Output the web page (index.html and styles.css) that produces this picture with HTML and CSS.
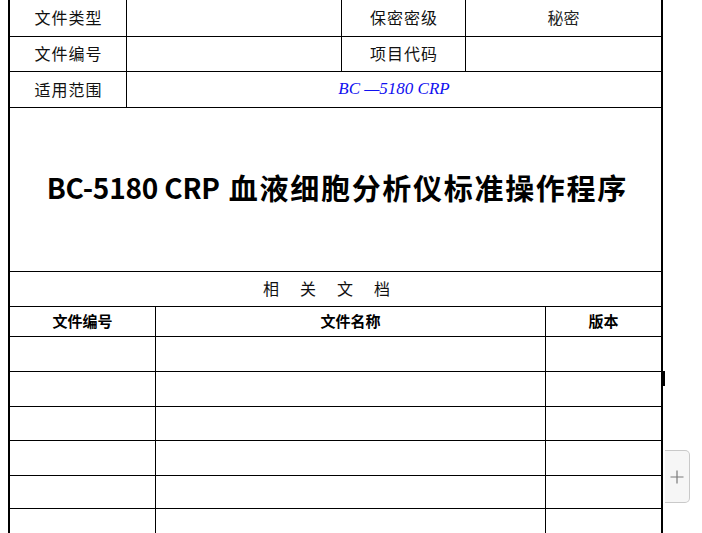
FILE: index.html
```html
<!DOCTYPE html>
<html lang="zh-CN">
<head>
<meta charset="utf-8">
<link rel="stylesheet" href="styles.css">
</head>
<body>
<div class="page">
  <div class="doc">
    <div class="info">
      <div class="cell label r1">文件类型</div>
      <div class="cell r1"></div>
      <div class="cell label r1">保密密级</div>
      <div class="cell value r1 last">秘密</div>
      <div class="cell label r2">文件编号</div>
      <div class="cell r2"></div>
      <div class="cell label r2">项目代码</div>
      <div class="cell r2 last"></div>
      <div class="cell label r3">适用范围</div>
      <div class="cell scope r3 last">BC —5180 CRP</div>
    </div>
    <div class="title"><span class="latin">BC-5180 CRP</span><span class="cjk">血液细胞分析仪标准操作程序</span></div>
    <div class="related">相关文档</div>
    <div class="docs">
      <div class="hcell">文件编号</div>
      <div class="hcell">文件名称</div>
      <div class="hcell last">版本</div>
      <div class="dcell h35"></div><div class="dcell h35"></div><div class="dcell h35 last"></div>
      <div class="dcell h35"></div><div class="dcell h35"></div><div class="dcell h35 last"></div>
      <div class="dcell h34"></div><div class="dcell h34"></div><div class="dcell h34 last"></div>
      <div class="dcell h35"></div><div class="dcell h35"></div><div class="dcell h35 last"></div>
      <div class="dcell h33"></div><div class="dcell h33"></div><div class="dcell h33 last"></div>
      <div class="dcell h35"></div><div class="dcell h35"></div><div class="dcell h35 last"></div>
    </div>
    <div class="marker"></div>
    <div class="addbtn">
      <svg width="14" height="14" viewBox="0 0 14 14"><path d="M7 0.5V13.5M0.5 7H13.5" stroke="#7a7a7a" stroke-width="1.2" fill="none"/></svg>
    </div>
  </div>
</div>
</body>
</html>
```
FILE: styles.css
```css
html, body {
  margin: 0;
  padding: 0;
  background: #fff;
  overflow: hidden;
}
.page {
  width: 702px;
  height: 533px;
  overflow: hidden;
  font-family: "Noto Sans CJK SC", "Noto Sans", sans-serif;
  color: #111;
}
.doc {
  position: relative;
  margin-left: 8px;
  width: 651px;
  border-left: 2px solid #000;
  border-right: 2px solid #000;
}
.info {
  display: grid;
  grid-template-columns: 117px 215px 124px 195px;
}
.cell {
  border-right: 1px solid #000;
  border-bottom: 1px solid #000;
  display: flex;
  align-items: center;
  justify-content: center;
  box-sizing: border-box;
  font-size: 16px;
  padding-bottom: 2px;
}
.cell.last { border-right: none; }
.r1 { height: 37px; }
.r2 { height: 35px; }
.r3 { height: 36px; }
.label {
  letter-spacing: 1px;
  padding-left: 1px;
}
.value { color: #222; }
.scope {
  grid-column: 2 / span 3;
  font-family: "Liberation Serif", serif;
  font-style: italic;
  color: #1010f0;
  font-size: 17px;
  padding-bottom: 1px;
}
.title {
  height: 164px;
  box-sizing: border-box;
  border-bottom: 1px solid #000;
  display: flex;
  align-items: center;
  justify-content: center;
  font-weight: 700;
  color: #000;
  padding-bottom: 5px;
  padding-left: 2px;
}
.title .latin {
  font-size: 28px;
  letter-spacing: -0.2px;
  margin-right: 9px;
}
.title .cjk {
  font-size: 29px;
  letter-spacing: 1.7px;
  margin-right: -1.7px;
}
.related {
  height: 35px;
  box-sizing: border-box;
  border-bottom: 1px solid #000;
  display: flex;
  align-items: center;
  justify-content: center;
  font-size: 16px;
  letter-spacing: 21px;
  padding-left: 3px;
  padding-bottom: 2px;
  color: #111;
}
.docs {
  display: grid;
  grid-template-columns: 146px 390px 115px;
}
.hcell {
  height: 30px;
  box-sizing: border-box;
  border-right: 1px solid #000;
  border-bottom: 1px solid #000;
  display: flex;
  align-items: center;
  justify-content: center;
  font-size: 15px;
  font-weight: 700;
  color: #000;
  padding-bottom: 2px;
}
.dcell {
  box-sizing: border-box;
  border-right: 1px solid #000;
  border-bottom: 1px solid #000;
}
.hcell.last, .dcell.last { border-right: none; }
.h35 { height: 35px; }
.h34 { height: 34px; }
.h33 { height: 33px; }
.marker {
  position: absolute;
  left: 651px;
  top: 371px;
  width: 4px;
  height: 15px;
  background: #000;
}
.addbtn {
  position: absolute;
  left: 655px;
  top: 450px;
  width: 25px;
  height: 53px;
  box-sizing: border-box;
  background: #f6f6f6;
  border: 1px solid #c9c9c9;
  border-left: none;
  border-radius: 0 5px 5px 0;
  display: flex;
  align-items: center;
  justify-content: center;
}
```
